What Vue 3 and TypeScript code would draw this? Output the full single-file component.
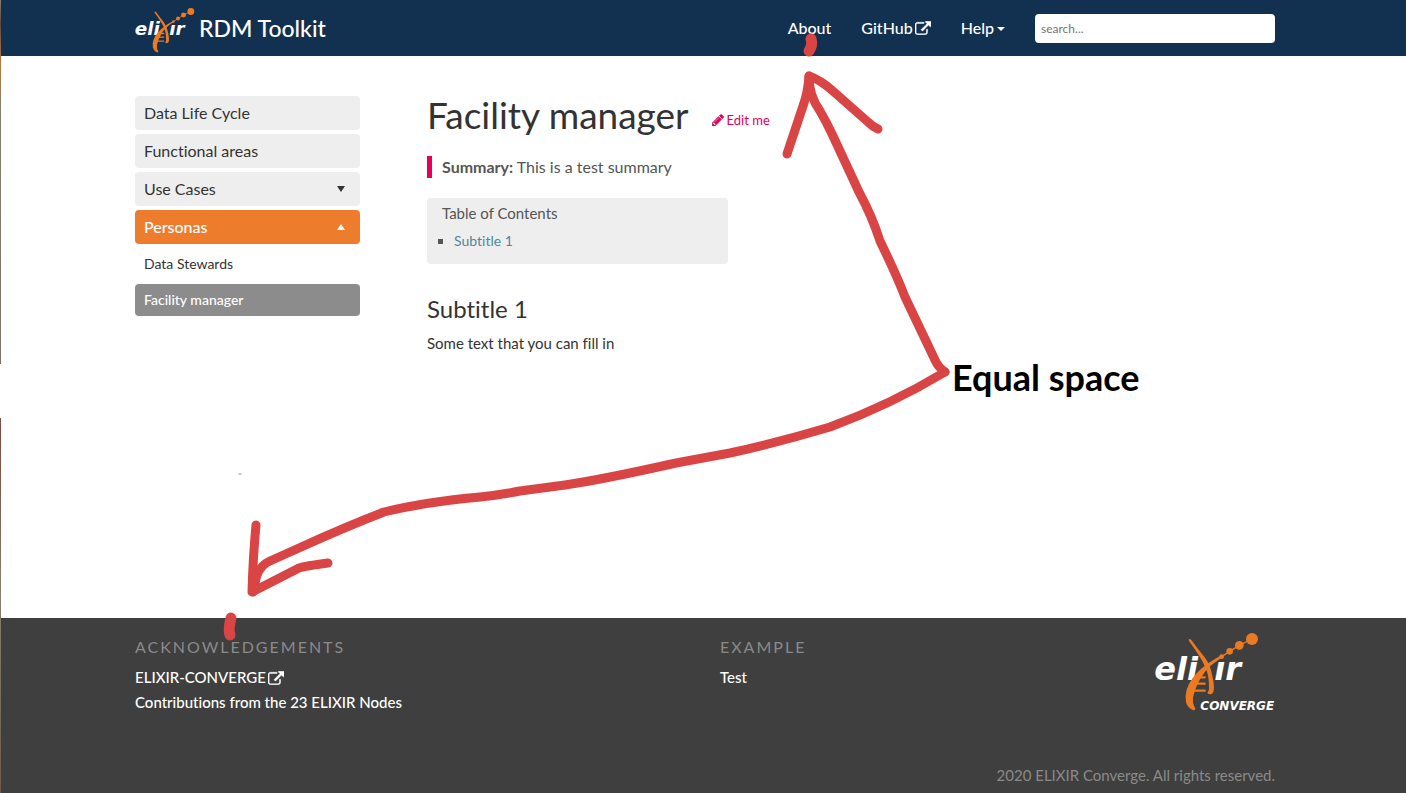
<script setup lang="ts">
import { h, ref } from 'vue'

interface SideItem {
  label: string
  kind: 'plain' | 'closed' | 'open' | 'sub' | 'current'
}

const query = ref('')

const sideItems: SideItem[] = [
  { label: 'Data Life Cycle', kind: 'plain' },
  { label: 'Functional areas', kind: 'plain' },
  { label: 'Use Cases', kind: 'closed' },
  { label: 'Personas', kind: 'open' },
  { label: 'Data Stewards', kind: 'sub' },
  { label: 'Facility manager', kind: 'current' },
]

const externalPath =
  'M1408 928v320q0 119-84.5 203.5T1120 1536H288q-119 0-203.5-84.5T0 1248V416q0-119 84.5-203.5T288 128h704q14 0 23 9t9 23v64q0 14-9 23t-23 9H288q-66 0-113 47t-47 113v832q0 66 47 113t113 47h832q66 0 113-47t47-113V928q0-14 9-23t23-9h64q14 0 23 9t9 23zM1792 64v512q0 26-19 45t-45 19-45-19l-176-176-652 652q-10 10-23 10t-23-10L695 983q-10-10-10-23t10-23l652-652-176-176q-19-19-19-45t19-45 45-19h512q26 0 45 19t19 45z'

const orange = '#ec7a23'
const beads = [
  [275, 106, 7],
  [299, 90, 10],
  [328, 72, 13],
  [366, 53, 18],
]

// The helix mark with its lettering, shared by the header and footer logos.
const ElixirMark = () =>
  h('g', [
    h(
      'g',
      {
        fill: '#fff',
        'font-family': '"DejaVu Sans", sans-serif',
        'font-size': '96',
        'font-weight': '700',
        'font-style': 'italic',
      },
      [h('text', { x: 73, y: 176 }, 'eli'), h('text', { x: 253, y: 176 }, 'ır')],
    ),
    h('g', { fill: 'none', stroke: orange, 'stroke-linecap': 'round' }, [
      h('path', { d: 'M196 168h28M190 187h34M186 208h38', 'stroke-width': 7 }),
      h('path', { d: 'M240 132L275 106L299 90L328 72L366 53', 'stroke-width': 4 }),
    ]),
    h('g', { fill: orange }, [
      h('path', {
        d: 'M176 55Q179 50 184 56Q204 84 224 108Q241 130 247 163Q257 210 246 217Q238 222 232 215Q236 211 237 202Q238 164 226 138Q212 106 179 62Q175 58 176 55Z',
      }),
      h('path', {
        d: 'M279 103Q246 125 225 151Q197 188 189 229Q187 247 196 261Q197 267 190 267Q174 262 168 243Q161 207 188 170Q210 141 240 122L275 101Z',
      }),
      ...beads.map(([cx, cy, r]) => h('circle', { cx, cy, r })),
    ]),
  ])
</script>

<template>
  <div class="page">
    <header class="topbar">
      <div class="container topbar-inner">
        <a class="brand" href="#">
          <svg class="brand-mark" viewBox="75 35 312 235" role="img" aria-label="elixir"><ElixirMark /></svg>
          <span>RDM Toolkit</span>
        </a>
        <nav class="nav">
          <a href="#">About</a>
          <a href="#">GitHub<svg class="ext" viewBox="0 0 1792 1536"><path :d="externalPath" /></svg></a>
          <a href="#">Help<span class="caret"></span></a>
          <input v-model="query" type="text" placeholder="search..." aria-label="Search" />
        </nav>
      </div>
    </header>

    <main class="container body">
      <aside>
        <ul class="side">
          <li v-for="item in sideItems" :key="item.label">
            <a href="#" :class="['side-link', item.kind]">
              <span>{{ item.label }}</span>
              <svg v-if="item.kind === 'closed'" class="tri" viewBox="0 0 8 6"><path d="M0 0h8L4 6z" /></svg>
              <svg v-if="item.kind === 'open'" class="tri" viewBox="0 0 8 6"><path d="M0 6h8L4 0z" /></svg>
            </a>
          </li>
        </ul>
      </aside>

      <article>
        <div class="title-row">
          <h1>Facility manager</h1>
          <a class="edit" href="#">
            <svg viewBox="0 0 1515 1536"><path d="M363 1408l91-91-235-235-91 91v107h128v128h107zM886 480q0-22-22-22-10 0-17 7L305 1007q-7 7-7 17 0 22 22 22 10 0 17-7l542-542q7-7 7-17zM832 288l416 416-832 832H0v-416zM1515 384q0 53-37 90l-166 166-416-416 166-165q36-38 90-38 53 0 91 38l235 234q37 39 37 91z" /></svg>
            Edit me
          </a>
        </div>
        <p class="summary"><b>Summary:</b> This is a test summary</p>
        <section class="toc">
          <p>Table of Contents</p>
          <ul>
            <li><a href="#subtitle-1">Subtitle 1</a></li>
          </ul>
        </section>
        <h2 id="subtitle-1">Subtitle 1</h2>
        <p class="text">Some text that you can fill in</p>
      </article>
    </main>

    <footer class="footer">
      <div class="container footer-cols">
        <section>
          <h3>Acknowledgements</h3>
          <a href="#">ELIXIR-CONVERGE<svg class="ext" viewBox="0 0 1792 1536"><path :d="externalPath" /></svg></a>
          <a href="#">Contributions from the 23 ELIXIR Nodes</a>
        </section>
        <section class="second">
          <div>
            <h3>Example</h3>
            <a href="#">Test</a>
          </div>
          <svg class="converge" viewBox="75 35 360 240" role="img" aria-label="elixir converge">
            <ElixirMark />
            <text class="converge-text" x="211" y="267">CONVERGE</text>
          </svg>
        </section>
      </div>
      <p class="container copyright">2020 ELIXIR Converge. All rights reserved.</p>
    </footer>

    <svg class="notes" width="1406" height="793" viewBox="0 0 1406 793">
      <defs>
        <linearGradient id="edge-tint" gradientUnits="userSpaceOnUse" x1="0" y1="0" x2="0" y2="793">
          <stop offset="0" stop-color="#8a7a70" />
          <stop offset="0.03" stop-color="#5c4a48" />
          <stop offset="0.08" stop-color="#b9783f" />
          <stop offset="0.14" stop-color="#84826f" />
          <stop offset="0.46" stop-color="#7a7468" />
          <stop offset="0.54" stop-color="#7d4a44" />
          <stop offset="0.75" stop-color="#85806f" />
          <stop offset="1" stop-color="#6e5a4c" />
        </linearGradient>
      </defs>
      <path class="edge" d="M0 0h1v364H0zM0 418h1v375H0z" />
      <g class="pen">
        <path d="M945 372Q938 367 935 360L905 297Q897 276 880 241Q872 216 859 192L833 136Q827 123 820 111Q809 96 809 76" />
        <path d="M787 154L803 106Q808 92 809 76Q821 80 834 92L868 122Q873 127 878 129" />
        <path d="M945 372Q890 405 830 427Q780 442 730 453L676 463Q600 480 565 485L520 491Q500 495 480 497Q425 502 384 512Q345 527 299 548L270 561Q255 568 255 588L253 592" />
        <path d="M256 525Q253 557 252 592L299 568Q305 566 328 563" />
        <path class="dash" d="M811 39Q813 45 809 51" />
        <path class="dash" d="M231 618Q228 630 230 635" />
      </g>
      <ellipse cx="240" cy="474" rx="2" ry="1" fill="#c8c8c8" />
      <text class="note" x="952" y="391">Equal space</text>
    </svg>
  </div>
</template>

<style>
body {
  margin: 0;
}
</style>

<style scoped>
* {
  box-sizing: border-box;
}

.page {
  position: relative;
  display: flex;
  flex-direction: column;
  min-height: 100vh;
  overflow: hidden;
  background: #fff;
  color: #333;
  font-family: Lato, sans-serif;
  font-size: 15px;
  font-variant-ligatures: no-common-ligatures;
  line-height: 20px;
}

.page a {
  text-decoration: none;
}

h1, h2, h3, p, ul {
  margin: 0;
  padding: 0;
  font-weight: 400;
}

ul {
  list-style: none;
}

.topbar, .body, .footer {
  padding-left: 4px;
}

.container {
  width: 100%;
  max-width: 1140px;
  margin: 0 auto;
}

.topbar {
  background: #12304f;
}

.topbar-inner {
  display: flex;
  align-items: center;
  justify-content: space-between;
  height: 56px;
}

.brand {
  display: flex;
  align-items: center;
  gap: 4px;
  color: #fff;
  font-size: 23px;
  font-weight: 500;
}

.brand-mark {
  width: 60px;
  height: 45px;
  margin-top: 5px;
}

.nav {
  display: flex;
  align-items: center;
  gap: 30px;
}

.nav a {
  display: flex;
  align-items: center;
  color: #fff;
  font-size: 16px;
  font-weight: 500;
}

.ext {
  width: 16px;
  height: 14px;
  margin-left: 2px;
  fill: #fff;
  stroke: #fff;
  stroke-width: 50;
}

.caret {
  margin: 2px 0 0 3px;
  border: 4px solid transparent;
  border-top-color: #fff;
  border-bottom: 0;
}

.nav input {
  width: 240px;
  height: 29px;
  padding: 0 6px;
  border: 0;
  border-radius: 4px;
  background: #fff;
  color: #555;
  font: 12px Lato, sans-serif;
}

.body {
  display: grid;
  grid-template-columns: 225px 1fr;
  column-gap: 67px;
  flex: 1;
  max-width: 1144px;
  padding-top: 40px;
}

.side-link {
  display: flex;
  align-items: center;
  justify-content: space-between;
  height: 34px;
  margin-bottom: 4px;
  padding: 0 15px 0 9px;
  border-radius: 4px;
  background: #eee;
  color: #333;
  font-size: 16px;
}

.side-link.open {
  background: #ee7c2d;
  color: #fff;
  font-weight: 500;
}

.side-link.sub,
.side-link.current {
  height: 32px;
  font-size: 14px;
}

.side-link.sub {
  background: none;
}

.side-link.current {
  background: #8c8c8c;
  color: #fff;
  font-weight: 500;
}

.tri {
  width: 8px;
  height: 6px;
  fill: currentColor;
}

.title-row {
  display: flex;
  align-items: flex-start;
  gap: 23px;
  min-height: 40px;
}

h1 {
  font-size: 37px;
  line-height: 38px;
}

.edit {
  display: flex;
  align-items: center;
  gap: 3px;
  padding-top: 14px;
  color: #e6005c;
  font-size: 13px;
}

.edit svg {
  width: 12px;
  height: 12px;
  fill: currentColor;
}

.summary {
  margin: 20px 0;
  padding-left: 10px;
  border-left: 5px solid #e6005c;
  color: #555;
  font-size: 16px;
  line-height: 22px;
}

.toc {
  width: 301px;
  height: 66px;
  padding: 5px 15px;
  border-radius: 4px;
  background: #eee;
  color: #555;
}

.toc ul {
  padding-left: 12px;
  margin-top: 8px;
  list-style: square;
}

.toc li {
  font-size: 14px;
}

.toc a {
  color: #4f87a3;
}

h2 {
  margin: 30px 0 9px;
  font-size: 24px;
  line-height: 30px;
}

.footer {
  background: #3f3f3f;
}

.footer-cols {
  display: grid;
  grid-template-columns: 585px 1fr;
  padding-top: 14px;
}

.footer h3 {
  margin: 5px 0 8px;
  color: #8a8a8a;
  font-size: 16px;
  line-height: 20px;
  letter-spacing: 2px;
  text-transform: uppercase;
}

.footer a {
  display: flex;
  align-items: center;
  color: #fff;
  font-weight: 500;
  line-height: 25px;
}

.second {
  display: flex;
  align-items: flex-start;
  justify-content: space-between;
}

.converge {
  width: 120px;
  height: 80px;
  margin-top: 1px;
  overflow: visible;
}

.converge-text {
  fill: #fff;
  font: italic bold 36px "DejaVu Sans", sans-serif;
}

.copyright {
  padding: 50px 0 8px;
  color: #8a8a8a;
  text-align: right;
}

.notes {
  position: absolute;
  top: 0;
  left: 0;
  pointer-events: none;
}

.edge {
  fill: url(#edge-tint);
}

.pen {
  fill: none;
  stroke: #d94545;
  stroke-width: 9;
  stroke-linecap: round;
  stroke-linejoin: round;
}

.dash {
  stroke-width: 11;
}

.note {
  font-size: 36px;
  font-weight: 700;
}
</style>
